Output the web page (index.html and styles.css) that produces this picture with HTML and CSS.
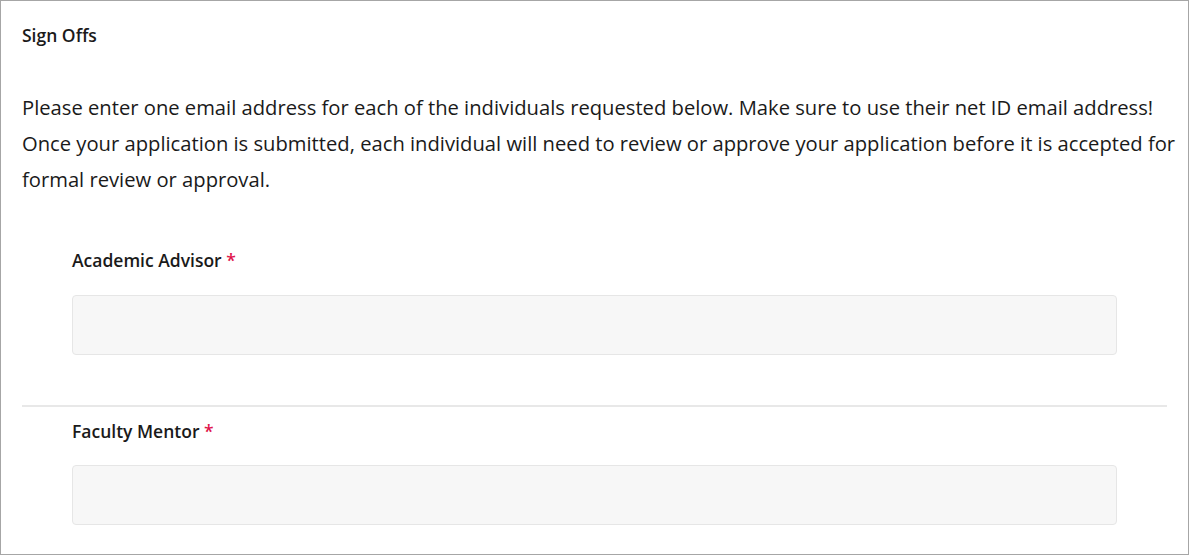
FILE: index.html
```html
<!DOCTYPE html>
<html>
<head>
<meta charset="utf-8">
<link rel="stylesheet" href="styles.css">
</head>
<body>
<div class="panel">
  <h2 class="title">Sign Offs</h2>
  <p class="intro">Please enter one email address for each of the individuals requested below. Make sure to use their net ID email address! Once your application is submitted, each individual will need to review or approve your application before it is accepted for formal review or approval.</p>
  <div class="field">
    <label class="label">Academic Advisor <span class="req">*</span></label>
    <div class="input"></div>
  </div>
  <div class="divider"></div>
  <div class="field field-second">
    <label class="label">Faculty Mentor <span class="req">*</span></label>
    <div class="input"></div>
  </div>
</div>
</body>
</html>
```
FILE: styles.css
```css
html, body {
  margin: 0;
  padding: 0;
  background: #fff;
}
body {
  font-family: "Open Sans", "Noto Sans", sans-serif;
  color: #1a1a1a;
}
.panel {
  box-sizing: border-box;
  width: 1189px;
  height: 555px;
  border: 1px solid #a6a6a6;
  padding: 0 21px 0 21px;
  overflow: hidden;
}
.title {
  margin: 23px 0 0 0;
  font-size: 17.5px;
  font-weight: 600;
  line-height: 22px;
}
.intro {
  margin: 43px -12px 0 0;
  font-size: 20.2px;
  line-height: 36px;
}
.field {
  padding: 0 50px;
}
.label {
  display: block;
  margin-top: 51px;
  font-size: 17.5px;
  font-weight: 600;
  line-height: 24px;
}
.field-second .label {
  margin-top: 12px;
}
.req {
  color: #e0144c;
}
.input {
  margin-top: 23px;
  height: 58px;
  background: #f7f7f7;
  border: 1px solid #e6e6e6;
  border-radius: 4px;
}
.field-second .input {
  margin-top: 22px;
}
.divider {
  margin-top: 50px;
  height: 2px;
  background: #e8e8e8;
}
```
